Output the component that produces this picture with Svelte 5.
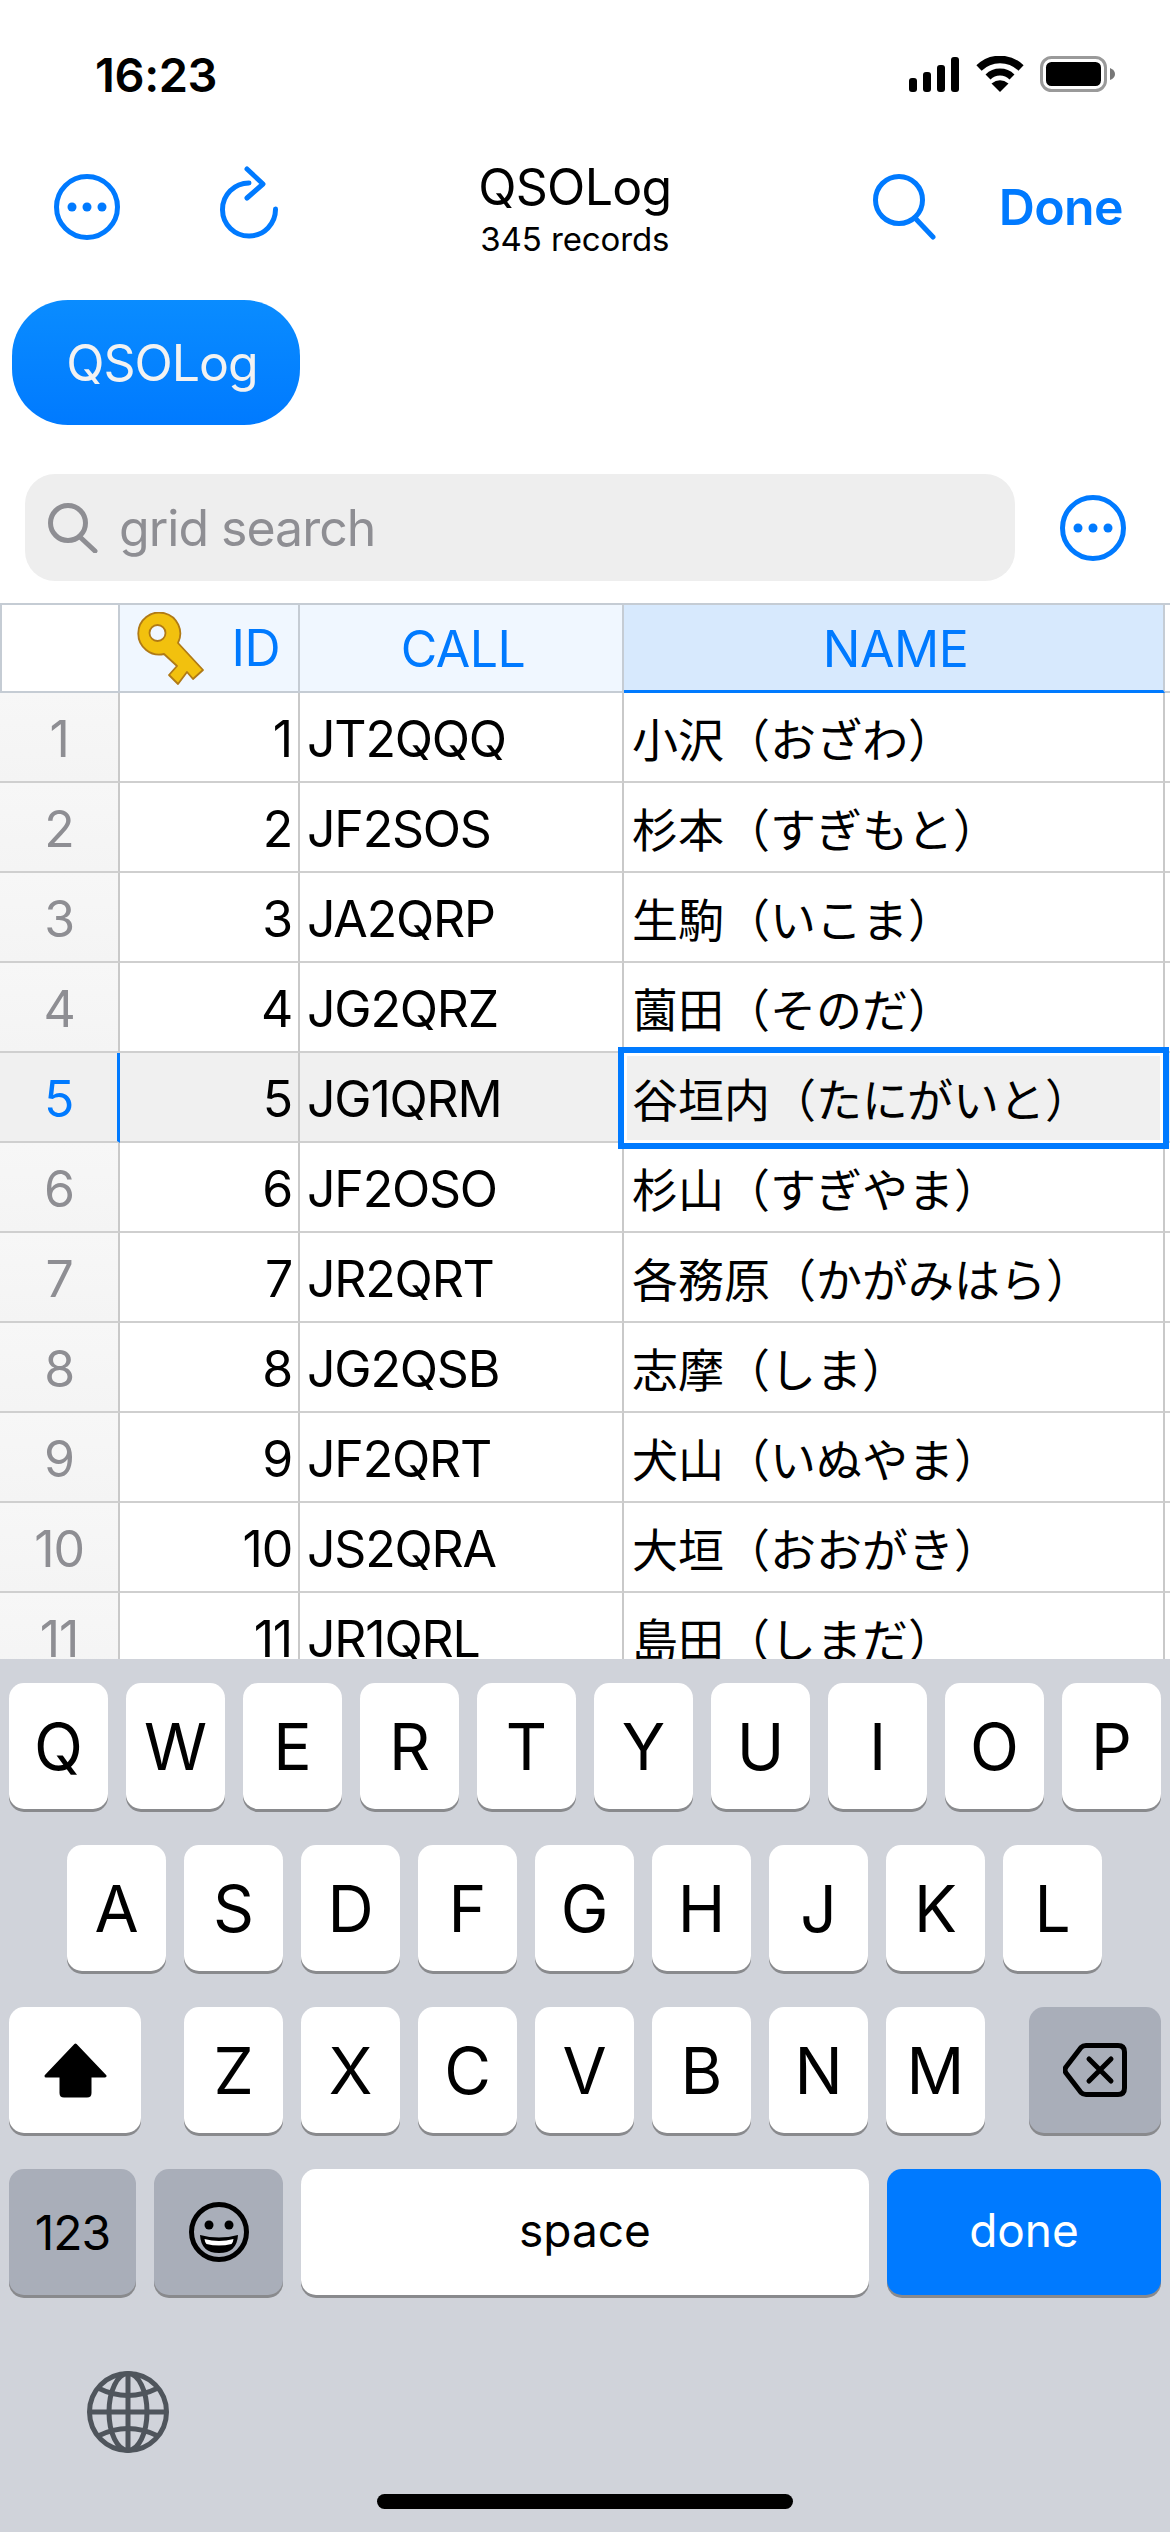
<script>
	const rows = [
		["JT2QQQ", "小沢（おざわ）"],
		["JF2SOS", "杉本（すぎもと）"],
		["JA2QRP", "生駒（いこま）"],
		["JG2QRZ", "薗田（そのだ）"],
		["JG1QRM", "谷垣内（たにがいと）"],
		["JF2OSO", "杉山（すぎやま）"],
		["JR2QRT", "各務原（かがみはら）"],
		["JG2QSB", "志摩（しま）"],
		["JF2QRT", "犬山（いぬやま）"],
		["JS2QRA", "大垣（おおがき）"],
		["JR1QRL", "島田（しまだ）"]
	];
	const selected = 5;

	const row1 = ["Q", "W", "E", "R", "T", "Y", "U", "I", "O", "P"];
	const row2 = ["A", "S", "D", "F", "G", "H", "J", "K", "L"];
	const row3 = ["Z", "X", "C", "V", "B", "N", "M"];
</script>

{#snippet dotsIcon()}
	<svg class="dots" width="66" height="66" viewBox="0 0 66 66">
		<circle cx="33" cy="33" r="30.5" fill="none" stroke="#007aff" stroke-width="5" />
		<circle cx="18" cy="33" r="4.5" fill="#007aff" />
		<circle cx="33" cy="33" r="4.5" fill="#007aff" />
		<circle cx="48" cy="33" r="4.5" fill="#007aff" />
	</svg>
{/snippet}

<div class="page">
	<div class="status">
		<span class="time">16:23</span>
		<div class="status-icons">
			<svg width="52" height="36" viewBox="0 0 52 36">
				<rect x="1" y="22" width="8" height="14" rx="3" />
				<rect x="15" y="16" width="8" height="20" rx="3" />
				<rect x="29" y="9" width="8" height="27" rx="3" />
				<rect x="43" y="1" width="8" height="35" rx="3" />
			</svg>
			<svg width="48" height="36" viewBox="0 0 48 36">
				<path d="M3 12 A30 30 0 0 1 45 12" fill="none" stroke="#000" stroke-width="7.5" />
				<path d="M12 21 A17 17 0 0 1 36 21" fill="none" stroke="#000" stroke-width="7" />
				<path d="M24 36 L15.500 27.500 Q24 21 32.500 27.500 Z" />
			</svg>
			<svg width="75" height="36" viewBox="0 0 75 36">
				<rect x="1.500" y="1.500" width="64" height="33" rx="10" fill="none" stroke="#9a9a9a" stroke-width="3" />
				<rect x="6" y="6" width="55" height="24" rx="5.500" />
				<path d="M70 12 Q75 14 75 18 Q75 22 70 24 Z" fill="#777" />
			</svg>
		</div>
	</div>

	<div class="nav">
		{@render dotsIcon()}
		<svg class="refresh" width="70" height="80" viewBox="0 0 70 80" fill="none" stroke="#007aff" stroke-width="5" stroke-linecap="round" stroke-linejoin="round">
			<path d="M60.500 44 A26.500 26.500 0 1 1 34 18" />
			<path d="M32 4 L48 19 L32 33" />
		</svg>
		<div class="title">
			<span class="name">QSOLog</span>
			<span class="sub">345 records</span>
		</div>
		<svg class="search" width="64" height="66" viewBox="0 0 64 66" fill="none" stroke="#007aff" stroke-width="5" stroke-linecap="round">
			<circle cx="26" cy="26" r="23.500" />
			<path d="M42 44 L60 63" />
		</svg>
		<span class="done">Done</span>
	</div>

	<div class="tabs">
		<div class="pill">QSOLog</div>
	</div>

	<div class="search-row">
		<div class="field">
			<svg width="50" height="50" viewBox="0 0 50 50" fill="none" stroke="#8e8e93" stroke-width="5" stroke-linecap="round">
				<circle cx="20" cy="20" r="17.500" />
				<path d="M32 34 L47 48" />
			</svg>
			<span>grid search</span>
		</div>
		{@render dotsIcon()}
	</div>

	<div class="table">
		<div class="tr head">
			<div class="td corner"></div>
			<div class="td h id">
				<svg width="68" height="73" viewBox="0 0 68 73">
					<path d="M41 31 L66 58 L56 67 L50 60 L41 72 L32 63 L40 54 L27 42 A21 21 0 1 1 41 31 Z" fill="#f2c10e" stroke="#b07a16" stroke-width="1.800" stroke-linejoin="round" />
					<circle cx="20.500" cy="21" r="8" fill="#f0f7ff" stroke="#b07a16" stroke-width="1.800" />
				</svg>
				<span>ID</span>
			</div>
			<div class="td h">CALL</div>
			<div class="td h active">NAME</div>
			<div class="td stub"></div>
		</div>
		{#each rows as [call, name], i}
			<div class="tr" class:sel={i + 1 === selected}>
				<div class="td num">{i + 1}</div>
				<div class="td idv">{i + 1}</div>
				<div class="td call">{call}</div>
				<div class="td nm">
					{name}
					{#if i + 1 === selected}<div class="cursor"></div>{/if}
				</div>
				<div class="td stub"></div>
			</div>
		{/each}
	</div>

	<div class="keyboard">
		<div class="krow">
			{#each row1 as k}<div class="key">{k}</div>{/each}
		</div>
		<div class="krow second">
			{#each row2 as k}<div class="key">{k}</div>{/each}
		</div>
		<div class="krow">
			<div class="key shift">
				<svg width="63" height="55" viewBox="0 0 63 55">
					<path d="M31.500 2 L61 33 H46 V50 Q46 53 43 53 H20 Q17 53 17 50 V33 H2 Z" stroke="#000" stroke-width="3" stroke-linejoin="round" />
				</svg>
			</div>
			<div class="letters">
				{#each row3 as k}<div class="key">{k}</div>{/each}
			</div>
			<div class="key del">
				<svg width="64" height="54" viewBox="0 0 64 54" fill="none" stroke="#000" stroke-width="5" stroke-linecap="round" stroke-linejoin="round">
					<path d="M23 2.500 H55 Q61.500 2.500 61.500 9 V45 Q61.500 51.500 55 51.500 H23 Q20 51.500 18 49.500 L3 30 Q1 27 3 24 L18 4.500 Q20 2.500 23 2.500 Z" />
					<path d="M26 16 L48 38 M48 16 L26 38" />
				</svg>
			</div>
		</div>
		<div class="krow">
			<div class="key gray num-key">123</div>
			<div class="key gray emoji">
				<svg width="60" height="60" viewBox="0 0 60 60">
					<circle cx="30" cy="30" r="27.500" fill="none" stroke="#000" stroke-width="5" />
					<circle cx="20" cy="23" r="4.500" />
					<circle cx="40" cy="23" r="4.500" />
					<path d="M11 33 Q30 38 49 33 Q48 51 30 51 Q12 51 11 33 Z" />
					<path d="M15.500 37 Q30 41 44.500 37 Q44 41 42.500 42 Q30 45 17.500 42 Q16 41 15.500 37 Z" fill="#fff" />
				</svg>
			</div>
			<div class="key space">space</div>
			<div class="key go">done</div>
		</div>
		<svg class="globe" width="82" height="82" viewBox="0 0 82 82" fill="none" stroke="#4f555c" stroke-width="5">
			<ellipse cx="41" cy="41" rx="38.500" ry="38.500" />
			<ellipse cx="41" cy="41" rx="19" ry="38.500" />
			<path d="M41 3 V79 M3 41 H79" />
			<path d="M11 17 Q41 32 71 17 M11 65 Q41 50 71 65" />
		</svg>
		<div class="home"></div>
	</div>
</div>

<style>
	:global(body) {
		margin: 0;
		background: #fff;
	}
	.page {
		width: 1170px;
		height: 2532px;
		display: flex;
		flex-direction: column;
		overflow: hidden;
		font-family: "Inter", "Noto Sans CJK JP", sans-serif;
		color: #000;
	}

	.status {
		height: 148px;
		flex: none;
		display: flex;
		justify-content: space-between;
		align-items: center;
		padding: 0 55px 0 95px;
		box-sizing: border-box;
	}
	.time {
		font-size: 47px;
		font-weight: 600;
		letter-spacing: -0.4px;
	}
	.status-icons {
		display: flex;
		align-items: center;
		gap: 16px;
	}

	.nav {
		height: 117px;
		flex: none;
		display: flex;
		align-items: center;
		padding-left: 54px;
		padding-right: 47px;
	}
	.refresh {
		margin-left: 95px;
		margin-bottom: 3px;
	}
	.title {
		flex: 1;
		display: flex;
		flex-direction: column;
		align-items: center;
		margin-left: -8px;
	}
	.name {
		font-size: 50px;
		line-height: 58px;
		letter-spacing: -0.7px;
	}
	.sub {
		font-size: 33px;
		line-height: 34px;
		margin-top: 6px;
		letter-spacing: -0.1px;
	}
	.search {
		margin-right: 62px;
	}
	.done {
		font-size: 50px;
		font-weight: 600;
		letter-spacing: -0.6px;
		color: #007aff;
	}

	.tabs {
		flex: none;
		margin-top: 35px;
		padding-left: 12px;
	}
	.pill {
		width: 288px;
		height: 125px;
		box-sizing: border-box;
		padding-left: 12px;
		border-radius: 56px;
		background: linear-gradient(#0a8cff, #007aff);
		color: #f2f2f2;
		font-size: 50px;
		letter-spacing: -1px;
		display: flex;
		align-items: center;
		justify-content: center;
	}

	.search-row {
		flex: none;
		margin-top: 49px;
		display: flex;
		align-items: center;
		padding-left: 25px;
	}
	.search-row .dots {
		margin-left: 45px;
	}
	.field {
		width: 990px;
		height: 107px;
		border-radius: 30px;
		background: #eeeeee;
		display: flex;
		align-items: center;
		gap: 21px;
		padding-left: 23px;
		box-sizing: border-box;
		color: #8e8e93;
		font-size: 50px;
		letter-spacing: -1px;
	}

	.table {
		flex: 1;
		min-height: 0;
		margin-top: 22px;
		overflow: hidden;
		position: relative;
	}
	.tr {
		display: grid;
		grid-template-columns: 120px 180px 324px 541px 5px;
		height: 90px;
		font-size: 50px;
		letter-spacing: -1.2px;
	}
	.td {
		box-sizing: border-box;
		border-right: 2px solid #c9c9c9;
		border-bottom: 2px solid #cfcfcf;
		display: flex;
		align-items: center;
		white-space: nowrap;
		position: relative;
	}
	.head .td {
		border-top: 2px solid #c5ccd4;
		border-color: #c5ccd4;
	}
	.corner {
		border-left: 2px solid #c5ccd4;
	}
	.h {
		background: #f0f7ff;
		color: #007aff;
		justify-content: center;
		letter-spacing: -0.5px;
		padding-left: 4px;
		padding-top: 2px;
	}
	.id {
		justify-content: space-between;
		padding: 0 18px 0 17px;
	}
	.h.active {
		background: #d7e9fd;
		border-bottom: 3px solid #007aff;
	}
	.stub {
		border-right: none;
	}
	.num {
		background: linear-gradient(#f7f7f7, #f4f4f4);
		color: #8e8e93;
		justify-content: center;
		padding-top: 3px;
	}
	.idv {
		justify-content: flex-end;
		padding-right: 6px;
		padding-top: 3px;
	}
	.call {
		padding-left: 7px;
		padding-top: 3px;
	}
	.nm {
		padding-left: 8px;
		font-size: 46px;
		letter-spacing: 0;
	}
	.sel .td {
		background: #f0f0f0;
	}
	.sel .num {
		color: #007aff;
		border-right: 3px solid #007aff;
	}
	.cursor {
		position: absolute;
		top: -6px;
		bottom: -8px;
		left: -6px;
		right: -6px;
		border: 6px solid #007aff;
		box-shadow: inset 0 0 0 3px #fff;
		z-index: 2;
	}

	.keyboard {
		flex: none;
		height: 873px;
		box-sizing: border-box;
		background: #d0d3da;
		padding-top: 24px;
		display: flex;
		flex-direction: column;
		position: relative;
		z-index: 3;
	}
	.krow {
		display: flex;
		gap: 18px;
		padding-left: 9px;
		margin-bottom: 36px;
	}
	.krow.second {
		padding-left: 67px;
	}
	.letters {
		display: flex;
		gap: 18px;
		margin-left: 25px;
		margin-right: 26px;
	}
	.key {
		width: 99px;
		height: 126px;
		background: #fff;
		border-radius: 15px;
		box-shadow: 0 3px 0 #898a8d;
		font-size: 64px;
		display: flex;
		align-items: center;
		justify-content: center;
		flex: none;
	}
	.shift {
		width: 132px;
	}
	.del {
		width: 132px;
		background: #a9aeb9;
	}
	.gray {
		background: #a9aeb9;
	}
	.num-key {
		width: 127px;
		font-size: 48px;
		letter-spacing: -1px;
	}
	.emoji {
		width: 129px;
	}
	.space {
		width: 568px;
		font-size: 46px;
		padding-bottom: 5px;
		box-sizing: border-box;
	}
	.go {
		width: 274px;
		background: #007aff;
		color: #fff;
		font-size: 46px;
		padding-bottom: 5px;
		box-sizing: border-box;
	}
	.globe {
		margin-top: 40px;
		margin-left: 87px;
	}
	.home {
		width: 416px;
		height: 15px;
		border-radius: 8px;
		background: #000;
		margin: 41px auto 0;
	}
</style>
